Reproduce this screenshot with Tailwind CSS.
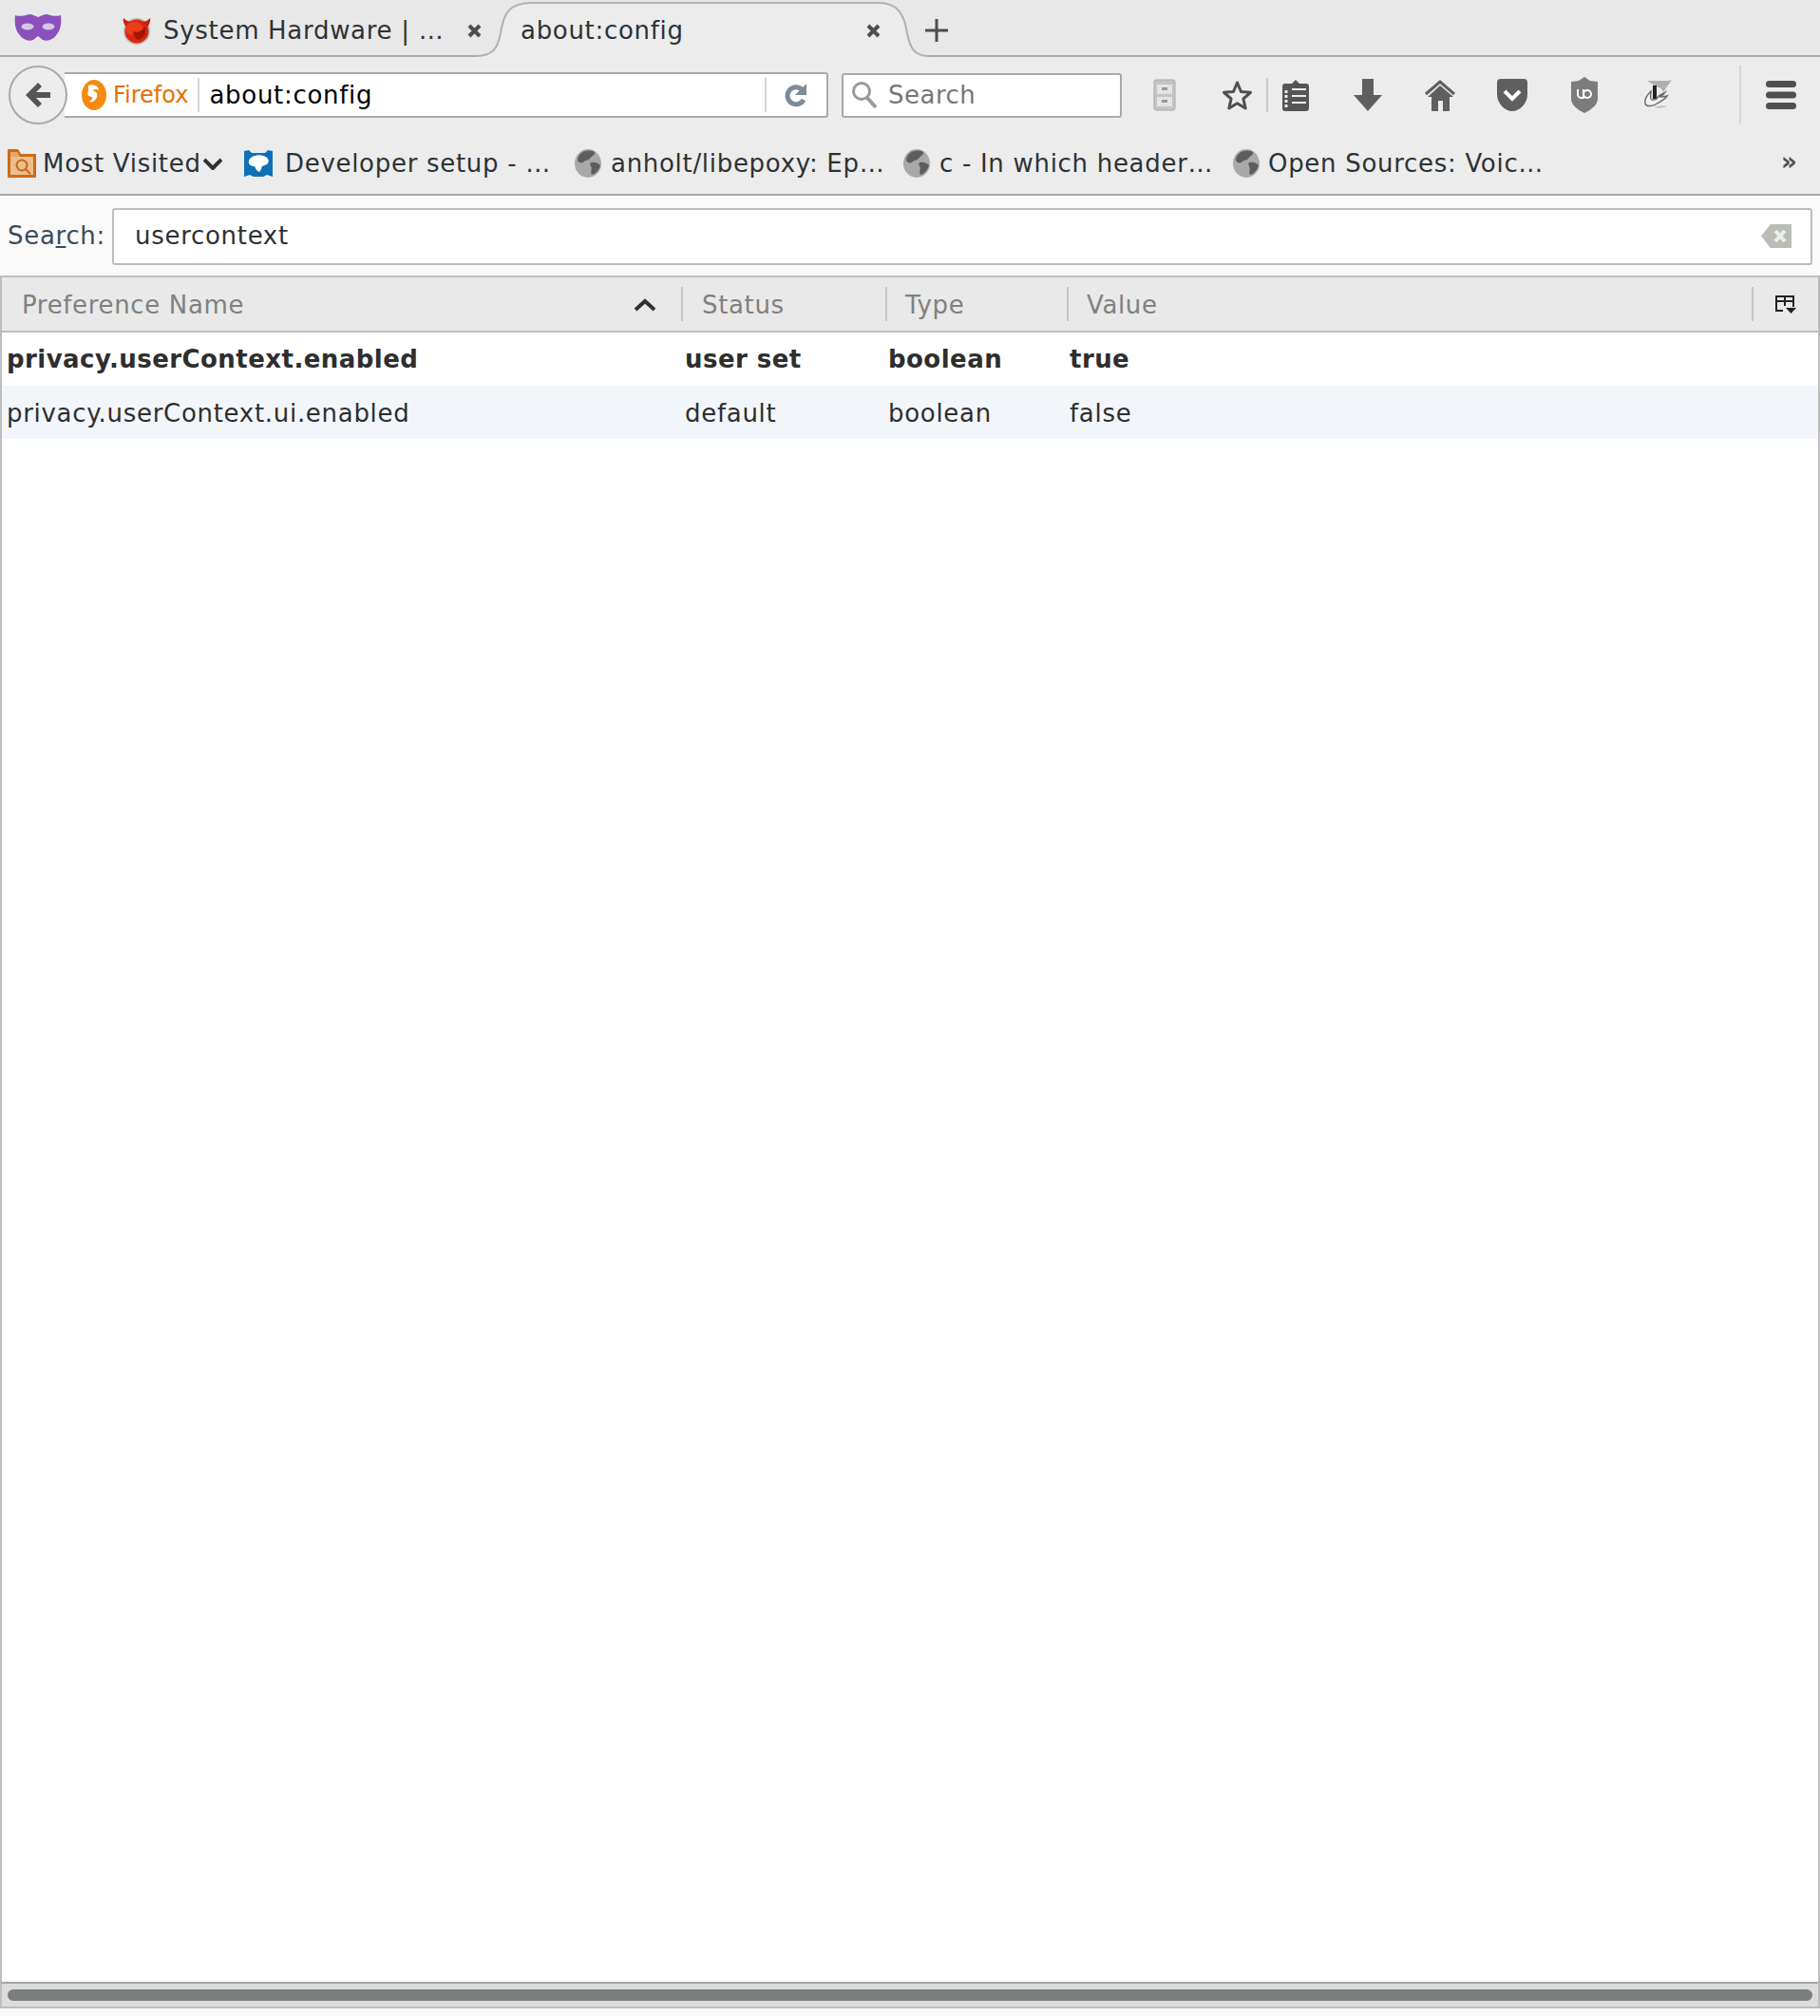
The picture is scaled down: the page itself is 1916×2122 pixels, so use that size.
<!DOCTYPE html>
<html lang="en">
<head>
  <meta charset="UTF-8">
  <title>about:config</title>
  <script src="https://cdn.jsdelivr.net/npm/@tailwindcss/browser@4"></script>
</head>
<body class="bg-[#fafafa] font-['DejaVu_Sans',sans-serif] text-[#2d3236] overflow-hidden">
  <div class="flex flex-col h-[2122px] w-[1916px]">

    <!-- tab strip -->
    <div class="relative flex items-center h-[60px] bg-[#e8e8e8] border-b-2 border-[#a9a9a9] text-[26px] tracking-[0.7px]">
      <svg class="ml-[15px] w-[50px] h-[30px] mt-[-1px]" viewBox="0 0 50 30"><path fill="#8b50bb" d="M1 2c5 2 11 0 15-1 3 0 6 2 9 3 3-1 6-3 9-3 4 1 10 3 15 1 1 8 0 15-4 20-4 6-10 8-15 6-2-1-3-3-5-4-2 1-3 3-5 4-5 2-11 0-15-6C1 17 0 10 1 2z"/><ellipse cx="14" cy="14" rx="6.500" ry="3.500" fill="#d5c6e2"/><ellipse cx="36" cy="14" rx="6.500" ry="3.500" fill="#d5c6e2"/></svg>
      <svg class="ml-[63px] w-[32px] h-[32px] mt-[5px]" viewBox="0 0 32 32"><circle cx="16" cy="17" r="14" fill="#bdbdbd"/><circle cx="16" cy="17" r="12.500" fill="#d8280f"/><path fill="#c8200f" d="M2 3c3 3 6 4 9 4-3 2-5 4-6 6C3 10 1 6 2 3zM30 3c-3 3-6 4-9 4 3 2 5 4 6 6 2-3 4-7 3-10z"/><ellipse cx="13" cy="14" rx="9" ry="7" fill="#e8401a"/><path fill="#a81508" d="M12 17c4 2 9 0 13-5 2 7-2 13-8 14-3-2-5-5-5-9z"/></svg>
      <span class="ml-[12px] mt-[7px] whitespace-nowrap">System Hardware | …</span>
      <svg class="absolute left-[491px] top-[24px] w-[17px] h-[17px]" viewBox="0 0 17 17"><path d="M3 3l11 11M14 3L3 14" stroke="#4a4f53" stroke-width="4"/></svg>
      <svg class="absolute left-0 top-0 w-[1000px] h-[60px]" viewBox="0 0 1000 60"><path fill="#ececec" d="M500 60V59C520 59 524 50 527 35 530 15 535 3 560 3H925C945 3 952 15 955 35 958 50 962 59 978 59V60z"/><path fill="none" stroke="#aab2ba" stroke-width="2" d="M500 59C520 59 524 50 527 35 530 15 535 3 560 3H925C945 3 952 15 955 35 958 50 962 59 978 59"/></svg>
      <span class="absolute left-[548px] top-[13px] whitespace-nowrap">about:config</span>
      <svg class="absolute left-[911px] top-[24px] w-[17px] h-[17px]" viewBox="0 0 17 17"><path d="M3 3l11 11M14 3L3 14" stroke="#4a4f53" stroke-width="4"/></svg>
      <svg class="absolute left-[973px] top-[19px] w-[26px] h-[26px]" viewBox="0 0 26 26"><path d="M13 1v24M1 13h24" stroke="#4d4d4d" stroke-width="3"/></svg>
    </div>

    <!-- nav bar -->
    <div class="flex items-center h-[80px] bg-[#ececec]">
      <div class="relative z-10 flex items-center justify-center ml-[9px] w-[62px] h-[62px] rounded-full border-2 border-[#a9a9a9] bg-[#ededed]">
        <svg class="w-[30px] h-[30px]" viewBox="0 0 30 30"><path fill="#555" d="M15 2l4 4-6 6h15v6H13l6 6-4 4L2 15z"/></svg>
      </div>
      <div class="flex items-center -ml-[3px] w-[804px] h-[48px] bg-white border-2 border-l-0 border-[#a9a9a9] rounded-r-[3px]">
        <svg class="ml-[17px] w-[28px] h-[32px]" viewBox="0 0 28 32"><ellipse cx="14" cy="16" rx="13" ry="16" fill="#f58a13"/><path fill="#fff" d="M8 6c6-2 11 1 11 5-3-2-6-1-6 1 3 0 5 2 4 6-1 4-5 6-8 5 2-1 4-3 3-5-2 0-4-1-5-3 1-3 1-5 1-9z"/></svg>
        <span class="ml-[6px] text-[24px] text-[#e27200] whitespace-nowrap">Firefox</span>
        <div class="ml-[10px] w-[2px] h-[36px] bg-[#d4d4d4]"></div>
        <span class="ml-[10px] text-[26px] tracking-[0.7px] text-black whitespace-nowrap">about:config</span>
        <div class="ml-auto w-[2px] h-[36px] bg-[#d4d4d4]"></div>
        <svg class="ml-[19px] mr-[20px] w-[24px] h-[26px]" viewBox="0 0 24 26"><path fill="none" stroke="#7c8a9a" stroke-width="5" d="M20 18a9 9 0 1 1-2-11"/><path fill="#7c8a9a" d="M23 1v12H11z"/></svg>
      </div>
      <div class="flex items-center ml-[14px] w-[295px] h-[47px] bg-white border-2 border-[#a9a9a9] rounded-[3px]">
        <svg class="ml-[8px] w-[28px] h-[30px]" viewBox="0 0 28 30"><circle cx="11" cy="11" r="8.500" fill="none" stroke="#9a9a9a" stroke-width="3"/><path d="M17 18l9 10" stroke="#9a9a9a" stroke-width="4"/></svg>
        <span class="ml-[11px] text-[26px] tracking-[0.5px] text-[#777] whitespace-nowrap">Search</span>
      </div>
      <!-- toolbar buttons -->
      <div class="flex items-center justify-center ml-[26px] w-[38px] h-[40px]">
        <svg class="w-[24px] h-[34px]" viewBox="0 0 24 34"><rect x="1" y="1" width="22" height="32" rx="2" fill="#c4c4c4" stroke="#aaa"/><rect x="4" y="6" width="16" height="10" fill="#e4e4e4"/><rect x="4" y="19" width="16" height="10" fill="#e4e4e4"/><rect x="9" y="9" width="6" height="3" fill="#999"/><rect x="9" y="22" width="6" height="3" fill="#999"/></svg>
      </div>
      <div class="flex items-center justify-center ml-[38px] w-[38px] h-[40px]">
        <svg class="w-[33px] h-[33px]" viewBox="0 0 33 33"><path fill="none" stroke="#4f4f4f" stroke-width="3" stroke-linejoin="round" d="M16.500 3l4 9.500 10 .8-7.600 6.700 2.300 10-8.700-5.300-8.700 5.300 2.300-10L2.500 13.300l10-.8z"/></svg>
      </div>
      <div class="ml-[12px] w-[2px] h-[36px] bg-[#c9c9c9]"></div>
      <div class="flex items-center justify-center ml-[10px] w-[38px] h-[40px]">
        <svg class="w-[28px] h-[34px]" viewBox="0 0 28 34"><path fill="#555" d="M3 5h7l4-4 4 4h7a3 3 0 0 1 3 3v23a3 3 0 0 1-3 3H3a3 3 0 0 1-3-3V8a3 3 0 0 1 3-3z"/><path stroke="#ececec" stroke-width="3" stroke-dasharray="3 2" d="M4 12v18"/><path stroke="#ececec" stroke-width="2" d="M10 11h15M10 18h15M10 25h15"/></svg>
      </div>
      <div class="flex items-center justify-center ml-[38px] w-[38px] h-[40px]">
        <svg class="w-[30px] h-[34px]" viewBox="0 0 30 34"><path fill="#5f5f5f" d="M9 0h12v17h9L15 34 0 17h9z"/></svg>
      </div>
      <div class="flex items-center justify-center ml-[38px] w-[38px] h-[40px]">
        <svg class="w-[32px] h-[34px]" viewBox="0 0 32 34"><path fill="#5f5f5f" d="M16 7L3 19h4v15h7V23h5v11h7V19h4z"/><path fill="none" stroke="#5f5f5f" stroke-width="3" d="M1 16L16 3l15 13"/></svg>
      </div>
      <div class="flex items-center justify-center ml-[38px] w-[38px] h-[40px]">
        <svg class="w-[32px] h-[34px]" viewBox="0 0 32 34"><path fill="#5f5f5f" d="M4 0h24a4 4 0 0 1 4 4v12c0 10-8 18-16 18S0 26 0 16V4a4 4 0 0 1 4-4z"/><path fill="none" stroke="#fff" stroke-width="4" d="M8 13l8 8 8-8"/></svg>
      </div>
      <div class="flex items-center justify-center ml-[38px] w-[38px] h-[40px]">
        <svg class="w-[28px] h-[38px]" viewBox="0 0 28 38"><path fill="#7c7c7c" d="M14 0l6 4 8 1v18c0 7-8 12-14 15C8 35 0 30 0 23V5l8-1z"/><path fill="none" stroke="#fff" stroke-width="2" d="M7 13v6a3.500 3.500 0 0 0 6 2M13 13v10M13 18a4 4 0 1 1 8 0 4 4 0 1 1-8 0"/></svg>
      </div>
      <div class="flex items-center justify-center ml-[39px] w-[38px] h-[40px]">
        <svg class="w-[32px] h-[32px]" viewBox="0 0 32 32"><path fill="#b0b0b0" d="M5 1h22l4-1-9 13c-1-3-3-5-6-5z"/><path fill="#e8e8e8" d="M10 7h6v13H10z"/><path fill="#222" d="M11 6h4v14h-4z"/><path fill="#f4f4f4" stroke="#6e6e6e" stroke-width="1.500" d="M9 12c-4 4-7 9-6 13 1 4 9 3 14-1 4-2 7-4 9-7-3 1-6 1-8 1 3-1 5-3 6-5-3 2-7 3-9 7-2 1-5 2-6 0-1-3 0-5 0-8z"/><path d="M12 29c5 1 11 1 14-1-4-1-9-1-14 1z" fill="#c4c4c4"/></svg>
      </div>
      <div class="ml-[67px] w-[2px] h-[62px] bg-[#d6d6d6]"></div>
      <div class="flex items-center justify-center ml-[26px] w-[32px] h-[32px]">
        <svg class="w-[32px] h-[32px]" viewBox="0 0 32 32"><rect y="1" width="32" height="7" rx="3.500" fill="#4f4f4f"/><rect y="12.500" width="32" height="7" rx="3.500" fill="#4f4f4f"/><rect y="24" width="32" height="7" rx="3.500" fill="#4f4f4f"/></svg>
      </div>
    </div>

    <!-- bookmarks bar -->
    <div class="flex items-center h-[66px] bg-[#ececec] border-b-2 border-[#a9a9a9] text-[26px] tracking-[0.7px] whitespace-nowrap">
      <svg class="ml-[8px] w-[30px] h-[30px]" viewBox="0 0 30 30"><path fill="#cf6a15" d="M0 0h11l3 5h16v25H0z"/><path fill="#e8a668" d="M3 3h7l3 5H3z"/><rect x="3" y="8" width="24" height="19" fill="#eebd8e"/><circle cx="15" cy="17" r="5.500" fill="none" stroke="#c9651a" stroke-width="2"/><path d="M19 21l5 5" stroke="#c9651a" stroke-width="2"/></svg>
      <span class="ml-[7px] w-[165px]">Most Visited</span>
      <svg class="ml-[4px] w-[20px] h-[13px]" viewBox="0 0 20 13"><path fill="none" stroke="#2d3236" stroke-width="4" d="M1 2l9 9 9-9"/></svg>
      <svg class="ml-[22px] w-[32px] h-[30px]" viewBox="0 0 32 30"><path fill="#0f70b7" d="M1 2l5-1 3 3h14l3-3 5 1v27l-6-2-4 2H11l-4-2-6 2z"/><path fill="#fff" d="M6 12c2-5 10-7 15-5 5 1 7 5 5 8-2 2-5 2-6 3-1 2-1 4-3 6-3-1-4-4-5-6-4 0-7-2-6-6z"/></svg>
      <span class="ml-[12px] w-[287px]">Developer setup - …</span>
      <svg class="ml-[18px] w-[28px] h-[30px]" viewBox="0 0 28 30"><ellipse cx="14" cy="15" rx="14" ry="15" fill="#a9a9a9"/><path fill="#5d5d5d" d="M7 4c4-3 10-3 14-1 1 3-3 4-5 7-1 2-5 1-7 4-2 1-6 0-6-3 0-3 2-5 4-7zM17 14c3-1 8 0 10 3-1 5-5 9-9 10-2-3 1-6-1-9-1-1-1-3 0-4z"/></svg>
      <span class="ml-[10px] w-[290px]">anholt/libepoxy: Ep…</span>
      <svg class="ml-[18px] w-[28px] h-[30px]" viewBox="0 0 28 30"><ellipse cx="14" cy="15" rx="14" ry="15" fill="#a9a9a9"/><path fill="#5d5d5d" d="M7 4c4-3 10-3 14-1 1 3-3 4-5 7-1 2-5 1-7 4-2 1-6 0-6-3 0-3 2-5 4-7zM17 14c3-1 8 0 10 3-1 5-5 9-9 10-2-3 1-6-1-9-1-1-1-3 0-4z"/></svg>
      <span class="ml-[10px] w-[289px]">c - In which header…</span>
      <svg class="ml-[20px] w-[28px] h-[30px]" viewBox="0 0 28 30"><ellipse cx="14" cy="15" rx="14" ry="15" fill="#a9a9a9"/><path fill="#5d5d5d" d="M7 4c4-3 10-3 14-1 1 3-3 4-5 7-1 2-5 1-7 4-2 1-6 0-6-3 0-3 2-5 4-7zM17 14c3-1 8 0 10 3-1 5-5 9-9 10-2-3 1-6-1-9-1-1-1-3 0-4z"/></svg>
      <span class="ml-[9px] w-[290px]">Open Sources: Voic…</span>
      <span class="ml-[250px] text-[26px] font-bold text-[#4f4f4f] -mt-[4px]">»</span>
    </div>

    <!-- about:config search -->
    <div class="flex items-center h-[84px] pt-[1px] text-[26px] tracking-[0.7px]">
      <label class="ml-[8px] text-[#3d4b5a] whitespace-nowrap">Sea<span class="underline">r</span>ch:</label>
      <div class="flex items-center ml-[7px] w-[1790px] h-[60px] bg-white border-2 border-[#bdbdbd] rounded-[3px]">
        <span class="ml-[22px]">usercontext</span>
        <svg class="ml-auto mr-[20px] w-[32px] h-[25px]" viewBox="0 0 32 25"><path fill="#b9bdb6" d="M10 0h22v25H10L0 12.500z"/><path d="M15 7l10 11M25 7L15 18" stroke="#eceeea" stroke-width="4"/></svg>
      </div>
    </div>

    <!-- prefs tree -->
    <div class="flex flex-col h-[1824px] border-y-2 border-x-2 border-[#bdbdbd] text-[26px]">
      <div class="flex items-center h-[58px] shrink-0 bg-[#e9e9e9] border-b-2 border-[#bdbdbd] text-[#808080] tracking-[0.65px]">
        <span class="ml-[21px] mt-[2px] w-[620px] whitespace-nowrap">Preference Name</span>
        <svg class="ml-[25px] mt-[1px] w-[22px] h-[14px]" viewBox="0 0 22 14"><path fill="none" stroke="#2d3236" stroke-width="4" d="M1 12L11 3l10 9"/></svg>
        <div class="ml-[27px] w-[2px] h-[36px] bg-[#c4c4c4]"></div>
        <span class="ml-[20px] mt-[2px] w-[193px]">Status</span>
        <div class="w-[2px] h-[36px] bg-[#c4c4c4]"></div>
        <span class="ml-[19px] mt-[2px] w-[170px]">Type</span>
        <div class="w-[2px] h-[36px] bg-[#c4c4c4]"></div>
        <span class="ml-[19px] mt-[2px] w-[700px]">Value</span>
        <div class="w-[2px] h-[36px] bg-[#c4c4c4]"></div>
        <svg class="ml-[23px] mt-[2px] w-[22px] h-[20px]" viewBox="0 0 22 20"><path fill="none" stroke="#222" stroke-width="2" d="M8 16H1V1h18v11M1 6h18M10 1v10"/><path fill="#222" d="M11 13h11l-5.500 6z"/></svg>
      </div>
      <div class="flex items-center h-[56px] shrink-0 bg-white font-bold text-[#2e2e2e] tracking-[0.45px]">
        <span class="ml-[5px] w-[714px] whitespace-nowrap">privacy.userContext.enabled</span>
        <span class="w-[214px]">user set</span>
        <span class="w-[191px]">boolean</span>
        <span>true</span>
      </div>
      <div class="flex items-center h-[56px] shrink-0 bg-[#f2f6fb] text-[#2e2e2e] tracking-[0.7px]">
        <span class="ml-[5px] mt-[2px] w-[714px] whitespace-nowrap">privacy.userContext.ui.enabled</span>
        <span class="mt-[2px] w-[214px]">default</span>
        <span class="mt-[2px] w-[191px]">boolean</span>
        <span class="mt-[2px]">false</span>
      </div>
      <div class="grow bg-white"></div>
      <div class="flex items-center h-[26px] shrink-0 bg-[#dcdcdc] border-t-2 border-[#a4a4a4] px-[6px]">
        <div class="w-full h-[12px] rounded-full bg-[#7a7e7e]"></div>
      </div>
    </div>
  </div>
</body>
</html>
